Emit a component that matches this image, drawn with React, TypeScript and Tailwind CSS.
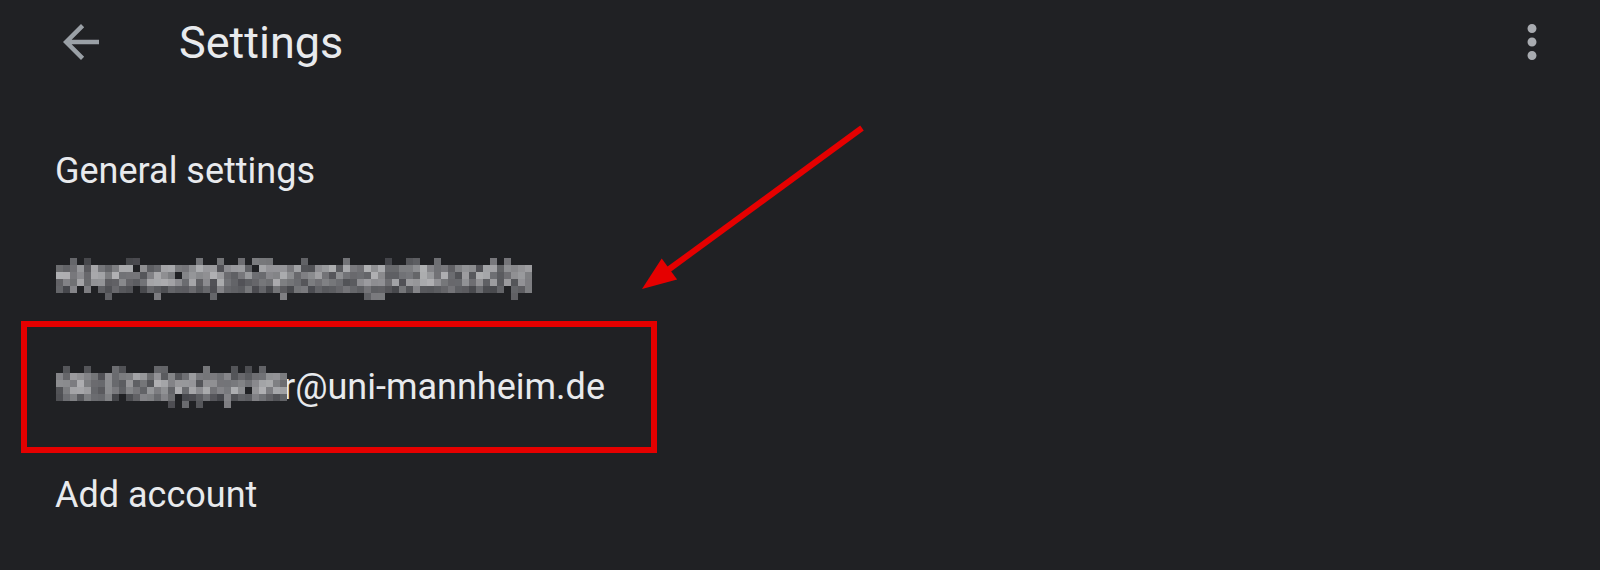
import React from "react";

const BG = [32, 33, 36];

function rnd(a: number, b: number, seed: number) {
  let h = Math.imul(a + 1, 374761393) ^ Math.imul(b + 7, 668265263) ^ Math.imul(seed + 3, 982451653);
  h = Math.imul(h ^ (h >>> 13), 1274126177);
  h = h ^ (h >>> 16);
  return (h >>> 0) / 4294967295;
}

function Pixelated({ cols, seed }: { cols: number; seed: number }) {
  const rows = 6;
  const s = 7;
  const cells: React.ReactNode[] = [];
  for (let r = 0; r < rows; r++) {
    for (let c = 0; c < cols; c++) {
      const p = rnd(r, c, seed);
      const q = rnd(c, r, seed + 11);
      let on = false;
      let lvl = 0;
      if (r === 0) {
        on = p < 0.3;
        lvl = 0.18 + q * 0.3;
      } else if (r === 5) {
        on = p < 0.16;
        lvl = 0.2 + q * 0.3;
      } else {
        on = p < 0.98;
        lvl = 0.25 + q * 0.5;
        if (r === 4) lvl *= 0.7;
      }
      if (!on) continue;
      const v = (i: number) => Math.round(BG[i] + (225 - BG[i]) * lvl);
      cells.push(
        <rect key={`${r}-${c}`} x={c * s} y={r * s} width={s} height={s} fill={`rgb(${v(0)},${v(1)},${v(2) + 2})`} />
      );
    }
  }
  return (
    <svg width={cols * s} height={rows * s} viewBox={`0 0 ${cols * s} ${rows * s}`} shapeRendering="crispEdges" className="block relative z-10">
      {cells}
    </svg>
  );
}

export default function App() {
  return (
    <div
      className="relative w-[1600px] h-[570px] bg-[#202124] text-[#e8eaed] overflow-hidden"
      style={{ fontFamily: "Roboto, 'Liberation Sans', sans-serif" }}
    >
      {/* Header */}
      <div className="flex items-center h-[84px] pl-[54px] pr-[41px]">
        <svg width="54" height="54" viewBox="0 0 24 24" fill="#9aa0a6">
          <path d="M20 11H7.83l5.59-5.59L12 4l-8 8 8 8 1.41-1.41L7.83 13H20v-2z" />
        </svg>
        <div className="ml-[71px] text-[45px] leading-none text-[#e8eaed]">Settings</div>
        <div className="flex-1" />
        <svg width="54" height="54" viewBox="0 0 24 24" fill="#a8abb0">
          <path d="M12 8c1.1 0 2-.9 2-2s-.9-2-2-2-2 .9-2 2 .9 2 2 2zm0 2c-1.1 0-2 .9-2 2s.9 2 2 2 2-.9 2-2-.9-2-2-2zm0 6c-1.1 0-2 .9-2 2s.9 2 2 2 2-.9 2-2-.9-2-2-2z" />
        </svg>
      </div>

      {/* Body */}
      <div className="pt-[33px] pl-[55px] flex flex-col">
        <div className="h-[108px] flex items-center text-[36px] leading-none">General settings</div>
        <div className="h-[108px] flex items-center pl-px">
          <Pixelated cols={68} seed={5} />
        </div>
        <div className="h-[108px] flex items-center pl-px">
          <Pixelated cols={33} seed={19} />
          <span className="text-[36px] leading-none -ml-[4px]">r@uni-mannheim.de</span>
        </div>
        <div className="h-[108px] flex items-center text-[36px] leading-none">Add account</div>
      </div>

      {/* Annotation: red box */}
      <div className="absolute left-[21px] top-[321px] w-[636px] h-[132px] border-[6px] border-[#e50000]" />

      {/* Annotation: arrow */}
      <svg className="absolute left-0 top-0" width="1600" height="570" viewBox="0 0 1600 570">
        <line x1="862" y1="128" x2="668" y2="270" stroke="#e50000" strokeWidth="6" />
        <polygon points="642,289 661.7,258.4 677.1,279.4" fill="#e50000" />
      </svg>
    </div>
  );
}
